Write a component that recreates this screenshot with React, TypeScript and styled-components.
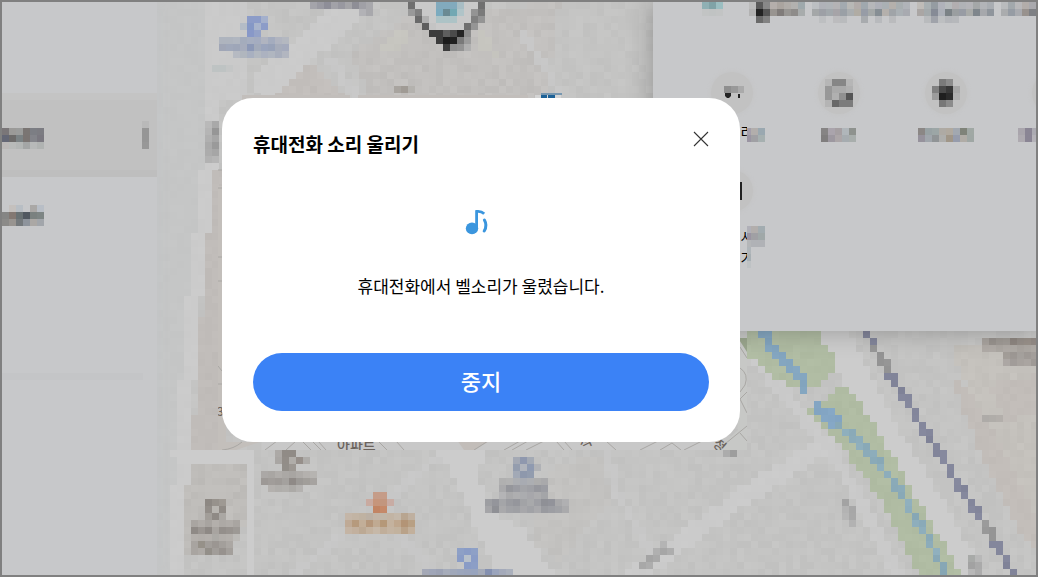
import React from "react";
import styled, { createGlobalStyle } from "styled-components";

const CELL = 7;
const COLS = 148;
const ROWS = 82;

const GlobalStyle = createGlobalStyle`
  *, *::before, *::after { box-sizing: border-box; }
  body {
    margin: 0;
    background: #c4c4c4;
    color: #000;
    font-family: "Noto Sans CJK KR", "Noto Sans", sans-serif;
  }
  button { font: inherit; color: inherit; border: 0; padding: 0; background: none; cursor: pointer; }
`;

/* ---------- map drawing ---------- */

type Point = [number, number];

const hash = (c: number, r: number) => {
  let n = (c * 374761393 + r * 668265263) | 0;
  n = Math.imul(n ^ (n >>> 13), 1274126177);
  return ((n ^ (n >>> 16)) >>> 0) / 4294967295;
};

const shift = (hex: string, d: number) =>
  "#" +
  [1, 3, 5]
    .map((i) => Math.max(0, Math.min(255, parseInt(hex.slice(i, i + 2), 16) + d)).toString(16).padStart(2, "0"))
    .join("");

const inside = (x: number, y: number, pts: Point[]) => {
  let hit = false;
  for (let i = 0, j = pts.length - 1; i < pts.length; j = i++) {
    const [xi, yi] = pts[i];
    const [xj, yj] = pts[j];
    if (yi > y !== yj > y && x < ((xj - xi) * (y - yi)) / (yj - yi) + xi) hit = !hit;
  }
  return hit;
};

const distance = (x: number, y: number, pts: Point[]) => {
  let best = Infinity;
  for (let i = 1; i < pts.length; i++) {
    const [ax, ay] = pts[i - 1];
    const [bx, by] = pts[i];
    const len = (bx - ax) ** 2 + (by - ay) ** 2;
    const t = Math.max(0, Math.min(1, ((x - ax) * (bx - ax) + (y - ay) * (by - ay)) / len));
    best = Math.min(best, Math.hypot(x - ax - t * (bx - ax), y - ay - t * (by - ay)));
  }
  return best;
};

type Shape = { color: string; area?: Point[]; line?: Point[]; width?: number; grain?: number };

const shapes: Shape[] = [
  { color: "#c5c6c6", grain: 1, area: [[0, 0], [206, 0], [206, 130], [180, 577], [0, 577]] },
  { color: "#c2bebb", grain: 3, area: [[262, 98], [310, 62], [350, 98]] },
  { color: "#c2c0be", grain: 4, area: [[370, 98], [350, 55], [400, 20], [560, 2], [545, 98]] },
  { color: "#c6c5bf", grain: 2, area: [[380, 48], [400, 30], [412, 34], [400, 48]] },
  { color: "#c6c5bf", grain: 2, area: [[475, 30], [490, 34], [498, 60], [482, 50]] },
  { color: "#c0bcb9", grain: 2, area: [[212, 170], [225, 170], [225, 450], [192, 450]] },
  { color: "#bfbdba", grain: 4, area: [[184, 458], [246, 458], [246, 520], [232, 556], [184, 556]] },
  { color: "#c4c1bc", grain: 3, area: [[950, 345], [1036, 335], [1036, 530], [1010, 500]] },
  { color: "#c2bdb9", grain: 2, area: [[952, 380], [968, 385], [1036, 515], [1036, 550], [1018, 530], [975, 440]] },
  { color: "#c2bdb9", grain: 2, area: [[990, 385], [1036, 375], [1036, 415], [1005, 420]] },
  { color: "#c3c2c0", grain: 3, area: [[550, 470], [600, 452], [612, 500], [560, 560], [530, 540]] },
  { color: "#cbcbcb", grain: 1, line: [[215, 0], [215, 110], [205, 200], [194, 300], [186, 400], [174, 580]], width: 14 },
  { color: "#cacaca", grain: 1, area: [[206, 0], [248, 0], [248, 98], [206, 98]] },
  { color: "#cbcbcb", grain: 1, line: [[345, 14], [266, 84]], width: 28 },
  { color: "#c8c8c8", grain: 1, line: [[331, 60], [356, 98]], width: 9 },
  { color: "#c8c8c8", grain: 1, line: [[520, 30], [562, 95]], width: 7 },
  { color: "#cccccc", grain: 0, line: [[176, 456], [250, 456], [250, 570]], width: 9 },
  { color: "#c8c8c8", grain: 1, line: [[290, 577], [370, 515], [440, 455]], width: 8 },
  { color: "#c7c7c7", grain: 1, line: [[375, 510], [440, 577]], width: 7 },
  { color: "#cccccc", grain: 0, area: [[436, 450], [485, 450], [478, 478], [500, 515], [525, 530], [555, 577], [500, 577], [470, 515], [455, 478]] },
  { color: "#cbcbcb", grain: 1, line: [[630, 580], [738, 500], [832, 440]], width: 18 },
  { color: "#c8c8c8", grain: 1, line: [[608, 452], [615, 490], [650, 550]], width: 8 },
  { color: "#cacaca", grain: 1, line: [[748, 350], [790, 400], [835, 455], [900, 577]], width: 12 },
  { color: "#cccccc", grain: 0, line: [[832, 331], [855, 375], [882, 430], [925, 500], [975, 585]], width: 30 },
  { color: "#b0bca3", grain: 2, area: [[740, 331], [818, 331], [838, 366], [820, 384], [788, 388], [765, 368], [740, 352]] },
  { color: "#b0bca3", grain: 2, area: [[846, 384], [870, 418], [905, 478], [965, 580], [922, 580], [884, 505], [850, 458], [806, 412]] },
  { color: "#84a6c0", grain: 2, line: [[762, 331], [776, 353], [802, 378], [804, 392]], width: 9 },
  { color: "#84a6c4", grain: 3, line: [[818, 408], [828, 416], [838, 424]], width: 12 },
  { color: "#8babb9", grain: 5, line: [[838, 424], [868, 450], [895, 483], [922, 528], [950, 580]], width: 7 },
  { color: "#83869b", grain: 4, line: [[866, 331], [880, 358], [906, 400], [960, 486], [1016, 577]], width: 7 },
  { color: "#969696", grain: 4, line: [[876, 350], [889, 372]], width: 8 },
  { color: "#979797", grain: 4, line: [[984, 522], [994, 535]], width: 8 },
];

const stamps: { x: number; y: number; rows: string[] }[] = [
  { x: 408, y: 2, rows: [
    "6f6f6f c9c9c9 c9c9c9 c9c9c9 82aabd 82aabd 82aabd a8bdc4 c9c9c9 c9c9c9 707070",
    "999999 808080 c9c9c9 c9c9c9 7cabbf 6a8a93 72a8b3 b0c4c8 c9c9c9 949494 7a7a7a",
    "- 6a6a6a b0b0b0 c9c9c9 adc3c6 adc3c6 adc3c6 c9c9c9 c9c9c9 808080 949494",
    "- - 5e5e5e c4c4c4 c9c9c9 c9c9c9 c9c9c9 c9c9c9 707070 959595 -",
    "- - - 3c3c3c 3c3c3c 5e5e5e 4b4b4b 252525 8c8c8c - -",
    "- - - - 3c3c3c 1b1b1b 202020 7a7a7a 9c9c9c - -",
    "- - - - - 3c3c3c 8e8e8e 949494 b0b0b0 - -",
  ] },
  { x: 310, y: 2, rows: [
    "a4a4aa 9a9aa2 8e8e98 a2a2a8 9898a0 a4a4a8 8e8e96 a0a0a6 a8a8ac",
    "- - - - - - - b2b2b6 a8a8ac",
  ] },
  { x: 219, y: 16, rows: [
    "- - - - 8c9cc8 8c9cc8 a4b0cc - - -",
    "- - - b4bcc6 8598c6 a8b4cc 8c9cc8 - - -",
    "- - - - 8898c8 94a2c8 - - - -",
    "aeb4be aeb4be b0b6c0 a4acbc a6aec0 a4acc0 b0b4c0 a4acbe b0b4c0 b4b8c0",
    "a0a6b6 a0a8ba 9ea6b8 a6acbc 8c98b6 a2aaba 9aa4bc 98a2b8 a6acba a4aabc",
    "- - b6bac2 b0b6be a8b0c0 b2b8c0 acb2c0 b0b6c0 a8aebc b2b6c0",
  ] },
  { x: 212, y: 65, rows: ["bec3c3 bec3c3 c4c6c6", "b8bdbd b5b5b5 b8b8b8"].slice(0, 1) },
  { x: 394, y: 86, rows: ["a8a49f a09b95 b4b2ae"] },
  { x: 205, y: 121, rows: ["b9b9b9 a9a9a9", "b5b5b5 969696", "b0b0b0 a6a6a6", "aaaaaa 9a9a9a", "acacac a6a6a6", "b2b2b2 b6b6b6"] },
  { x: 261, y: 450, rows: [
    "- - aca9a6 908b86 908b86 - - -",
    "- - a9a6a3 928d88 b0ada9 968f8a aeaca9 -",
    "- - - 928e89 9c9792 - - -",
    "aba8a6 a9a6a3 b0adaa aba8a5 a8a5a2 aeaba8 b4b1ae b6b4b1",
    "9d9996 a19d9a 9e9a97 a4a19e 8f8a87 9c9996 a19e9a a6a3a0",
    "- b4b1ae b0aeab b2b0ad acaaa7 b4b2b0 - -",
  ] },
  { x: 191, y: 499, rows: [
    "- - 8d8883 97928c 9e9993 - -",
    "- - 938e89 b8b5b0 908b86 - -",
    "- - a29e99 8f8a85 aaa7a3 - -",
    "a9a5a1 b0aca8 a8a4a0 b3afab ada9a5 b0aca8 a9a5a1",
    "8f8a86 9b9692 8e8985 a8a4a0 948f8b 98938f 9d9995",
    "b4b0ac b2aeaa b4b0ac acaaa6 b2aeaa b4b0ac -",
    "a8a4a0 969189 a29e9a 9b9692 a39f9b aba7a3 -",
    "a9a5a1 aeaaa6 938f89 a19d99 97928e a39f9b -",
  ] },
  { x: 345, y: 492, rows: [
    "- - - - c59c88 c59c88 - - - -",
    "- - - c9aaa0 c6957b c2967e c8aca4 - - -",
    "- - - - c28463 c58969 - - - -",
    "c4b6a8 c2b4a4 bfb2a2 bbb0a4 c2b4a6 c0b6a8 c2b4a4 c4b8aa b8a590 bfb0a0",
    "bfaa96 b69a7d c2ae98 b5977b c0aa92 b59878 c4b29e bfa78e b39476 b8a084",
    "c4b4a4 c2b09e bca994 c3b29f c6b8a8 c0ae9a c4b4a2 c2b29e b9a289 c2b09c",
  ] },
  { x: 422, y: 548, rows: [
    "- - - - - 8ea0c6 8a9cc6 8ea0c6 - - - - -",
    "- - - - - 8a9cc6 b8c0ca 8a9cc6 - - - - -",
    "- - - - - - 8a9cc6 8c9ec6 - - - - -",
    "a4a8b6 a0a6b8 9ca2b4 a6acba a0a8ba 9ca6bc 9aa4bc 98a4be a4aab8 8490b0 9aa4bc a4aaba aab0bc",
  ] },
  { x: 485, y: 457, rows: [
    "- - - - a4a9b4 8f98ae a4aab4 - - - - -",
    "- - - - 949dae b0b4bc 8f9ab0 b0b2b6 - - - -",
    "- - - - a2a9b6 8e98ac 929cae - - - - -",
    "- - b0b0b0 b2b2b2 acaeb2 a8abb2 acaeb2 adadad a9a9ab - - -",
    "- - a9a9ab 95969b 9b9ca2 a3a4a8 9fa0a5 96979d 9b9ca2 - - -",
    "- - b4b4b6 a9a9ab aeaeb0 abacaf a7a7ab acacae a4a5a8 - - -",
    "9d9ea2 94959b a4a5a8 9a9ba0 95969c a2a3a6 a8a9ab 9e9fa4 8f9096 92939a a8a8aa b0b0b2",
    "a5a5a8 8f9095 a9a9ab a1a2a6 9fa0a4 a7a7aa a1a2a6 a9a9ac 999a9f 9d9ea3 a1a2a6 aaaaac",
  ] },
  { x: 639, y: 541, rows: ["- - - b4b4b4 -", "- - b0b0b0 a6a6a6 adadad", "- a4a4a4 a9a9a9 - -", "a8a8a8 adadad - - -"] },
  { x: 723, y: 450, rows: ["acacac 9d9d9d"] },
  { x: 842, y: 499, rows: ["a3a3a3 -", "b3b3b3 a7a7a7", "b6b6b6 a8a8a8", "- b2b2b2"] },
  { x: 982, y: 338, rows: [
    "a8a39e 98938e 9f9a95 a19c97 8e8680 968f89 989089 928a85",
    "b0aba6 b1aca7 aca7a2 b0aba6 afaaa5 a9a49f aca7a2 afaaa5",
    "- - - a39e99 9d9894 a5a19d 9f9a96 a49f9b",
    "- - - aca7a4 a19c99 a7a29e aaa5a1 9f9a96",
  ] },
  { x: 982, y: 415, rows: ["aeaba8 b0ada9 b3afab"] },
  { x: 968, y: 555, rows: ["a8aaa8 b8b8b8", "a2a2a2 aaaaaa", "b8b8b8 acacac"] },
];

const buildMap = () => {
  const grid: string[][] = [];
  for (let r = 0; r < ROWS; r++) {
    const row: string[] = [];
    for (let c = 0; c < COLS; c++) {
      const x = 2 + c * CELL + CELL / 2;
      const y = 2 + r * CELL + CELL / 2;
      let color = "#c4c4c3";
      let grain = 3;
      for (const s of shapes) {
        const hit = s.area ? inside(x, y, s.area) : distance(x, y, s.line!) <= s.width! / 2;
        if (hit) {
          color = s.color;
          grain = s.grain ?? 2;
        }
      }
      row.push(shift(color, Math.round((hash(c, r) - 0.5) * 2 * grain)));
    }
    grid.push(row);
  }
  for (const s of stamps) {
    const c0 = Math.round((s.x - 2) / CELL);
    const r0 = Math.round((s.y - 2) / CELL);
    s.rows.forEach((line, r) =>
      line.split(" ").forEach((v, c) => {
        if (v !== "-" && grid[r0 + r] && c0 + c < COLS) grid[r0 + r][c0 + c] = "#" + v;
      }),
    );
  }
  const paths = new Map<string, string>();
  grid.forEach((row, r) => {
    let start = 0;
    for (let c = 1; c <= COLS; c++) {
      if (c === COLS || row[c] !== row[start]) {
        const w = (c - start) * CELL;
        paths.set(row[start], (paths.get(row[start]) ?? "") + `M${start * CELL} ${r * CELL}h${w}v${CELL}h-${w}z`);
        start = c;
      }
    }
  });
  return [...paths.entries()];
};

const mapPaths = buildMap();

const MapLayer = styled.svg`
  position: absolute;
  inset: 0;
  width: 100%;
  height: 100%;
`;

const CityMap = () => (
  <MapLayer viewBox="0 0 1034 573" preserveAspectRatio="xMinYMin slice" aria-hidden="true">
    <g shapeRendering="crispEdges">
      {mapPaths.map(([fill, d]) => (
        <path key={fill} fill={fill} d={d} />
      ))}
    </g>
    <clipPath id="street-detail">
      <path d="M218 130H747V450H218zM242 93H652V110H242z" />
    </clipPath>
    <g transform="translate(-2 -2)">
      <g clipPath="url(#street-detail)">
        <path fill="#c3bfbb" d="M218 186h8v256h34l-24 8h-18z" />
        <path fill="#c2bebb" d="M242 95h108v6h-108zM358 95h170v6h-170z" />
        <path fill="#c8c8c8" d="M262 440H747V450H262z" />
        <path fill="#c2bdb9" d="M457 440h34l-16 10h-11z" />
        <path fill="#c7c8c6" d="M738 330h9v120h-31l22-20z" />
        <path fill="#9aa68d" d="M738 338h9v14l-9-14z" />
        <g fill="none" stroke="#a9a7a4" strokeWidth="1">
          <path d="M218 170h4M218 188h4M218 257h4M218 281h4M218 366l4 5M218 384h4M222 450q12-1 20-8M265 450l12-9M286 450l10-9M302 441l9 9M312 441l9 9M318 441l8 9M378 441l9 9M396 441l8 9" />
          <path d="M474 450l14-9M504 450l16-9M512 450l16-9M526 450l18-9M556 441l8 9M564 441l8 9M606 441l10 9M640 450l18-9M660 450l12-7l9 7M684 450l18-9M740 347l7 11M740 368q9 6 5 17l-5 7M740 399l7-7M740 399l7 14M720 448l27-22M740 433l7 8" />
        </g>
        <path fill="#d4d4d4" d="M535 95h26v4h-26z" />
        <path fill="#7797b0" d="M541 93h21v2h-21z" />
        <path fill="#1c6196" d="M541 95h6v3h-6zM548 95h7v3h-7z" />
        <g fill="#6b635c" fontSize="14" fontWeight="500">
          <text x="337" y="450">아파트</text>
          <text x="217" y="416" fontSize="12">3</text>
          <text x="582" y="449" transform="rotate(-25 582 449)" fontSize="13">적</text>
          <text x="712" y="445" transform="rotate(40 712 445)" fontSize="13">정</text>
        </g>
      </g>
    </g>
  </MapLayer>
);

/* ---------- small tile drawings ---------- */

const Tiles = styled.svg`
  display: block;
  flex: none;
`;

const Mosaic = ({ rows, trim = 0 }: { rows: string[]; trim?: number }) => {
  const cells = rows.map((r) => r.split(" "));
  const w = Math.max(...cells.map((r) => r.length)) * CELL - trim;
  const h = rows.length * CELL;
  return (
    <Tiles width={w} height={h} viewBox={`${trim} 0 ${w} ${h}`} shapeRendering="crispEdges" aria-hidden="true">
      {cells.map((row, r) =>
        row.map((v, c) =>
          v === "-" ? null : <rect key={`${r}-${c}`} x={c * CELL} y={r * CELL} width={CELL} height={CELL} fill={"#" + v} />,
        ),
      )}
    </Tiles>
  );
};

/* ---------- page ---------- */

const Page = styled.div`
  position: relative;
  display: flex;
  justify-content: space-between;
  align-items: stretch;
  min-height: 100vh;
  border: 2px solid #808080;
  overflow: hidden;
`;

const Sidebar = styled.nav`
  position: relative;
  width: 15%;
  padding-top: 91px;
  background: #c7c8ca;
  box-shadow: 0 0 10px #c2c4c6;
`;

const DeviceRow = styled.button<{ $active?: boolean }>`
  display: flex;
  justify-content: space-between;
  align-items: flex-end;
  width: 100%;
  height: 84px;
  padding: 0 8px ${(p) => (p.$active ? 21 : 28)}px 0;
  background: ${(p) => (p.$active ? "#c1c1c1" : "transparent")};
  border-top: 7px solid ${(p) => (p.$active ? "#c4c4c4" : "transparent")};
  border-bottom: 7px solid ${(p) => (p.$active ? "#bebebe" : "transparent")};
`;

const Divider = styled.hr`
  height: 7px;
  margin: 112px 14px 0 0;
  border: 0;
  background: #c4c5c7;
`;

const DevicePanel = styled.section`
  position: relative;
  align-self: flex-start;
  width: 37%;
  height: 329px;
  background: #c7c8ca;
  box-shadow: 0 0 24px rgba(0, 0, 0, 0.25);
  overflow: hidden;
`;

const PanelHeader = styled.header`
  display: flex;
  align-items: flex-start;
  gap: 7px;
  height: 70px;
  padding-left: 49px;
`;

const Spacer = styled.span`
  width: 14px;
`;

const Actions = styled.div`
  display: grid;
  grid-template-columns: repeat(4, 107px);
  grid-auto-rows: 98px;
  padding-left: 25px;
`;

const Action = styled.button`
  display: flex;
  flex-direction: column;
  align-items: center;
  gap: 14px;
`;

const Disc = styled.span`
  display: flex;
  align-items: center;
  justify-content: center;
  width: 42px;
  height: 42px;
  border-radius: 50%;
  background: #c2c2c2;
  box-shadow: 0 0 5px #c3c3c3;
`;

const LabelLines = styled.span`
  align-self: flex-end;
  padding-right: 20px;
`;

const LabelLine = styled.span<{ $tall?: boolean; $inset?: boolean }>`
  display: flex;
  align-items: flex-start;
  justify-content: flex-end;
  height: ${(p) => (p.$tall ? 21 : 14)}px;
  padding-right: ${(p) => (p.$inset ? 14 : 0)}px;
  font-size: 14px;
  line-height: ${(p) => (p.$tall ? 21 : 7)}px;
`;

const LabelText = styled.span`
  width: 7px;
  white-space: nowrap;
  overflow-x: clip;
`;

/* ---------- dialog ---------- */

const Overlay = styled.div`
  position: absolute;
  inset: 0;
  padding: 96px 16px 16px 220px;
`;

const Dialog = styled.div`
  display: flex;
  flex-direction: column;
  width: 100%;
  max-width: 518px;
  padding: 31px;
  border-radius: 31px;
  background: #fff;
`;

const DialogHeader = styled.div`
  display: flex;
  justify-content: space-between;
  align-items: flex-start;
`;

const Title = styled.h1`
  margin: 0;
  font-size: 19px;
  font-weight: 700;
  line-height: 30px;
`;

const Close = styled.button`
  display: flex;
  width: 16px;
  height: 20px;
  align-items: center;
  justify-content: center;
`;

const Body = styled.div`
  display: flex;
  flex-direction: column;
  align-items: center;
  gap: 38px;
  padding: 50px 0 54px;
`;

const Message = styled.p`
  margin: 0;
  font-size: 17px;
  line-height: 26px;
`;

const Stop = styled.button`
  height: 58px;
  padding-bottom: 4px;
  border-radius: 29px;
  background: #3b82f6;
  color: #fff;
  font-size: 22px;
  font-weight: 500;
  line-height: 32px;
`;

export default function App() {
  return (
    <>
      <GlobalStyle />
      <Page>
        <CityMap />
        <Sidebar>
          <DeviceRow $active aria-label="device">
            <Mosaic
              rows={[
                "7a7678 9b9a98 9b9c9b 7a7573 7c7e84 7c7c82",
                "646775 6d6b6a 7b8284 7a7472 83848a 7a7880",
                "bbb8b7 b8bab9 b3b6b5 a4a6a6 b7b9b9 b0b3b2",
              ]}
            />
            <Mosaic rows={["b9b9b9", "969696", "969696", "989898"]} />
          </DeviceRow>
          <DeviceRow aria-label="device">
            <Mosaic
              rows={[
                "- c4c0bd b8bec4 - aaa8a6 b8bec6",
                "858584 837872 697173 515860 7a8180 7d8584",
                "8b8a88 989490 74797c 8e949c aba8a5 a2a6ab",
              ]}
            />
          </DeviceRow>
          <Divider />
        </Sidebar>
        <DevicePanel>
          <PanelHeader>
            <Mosaic rows={["8fb0b4 80a3a7 9bbec1", "c2c4c4 c0c3c3 c2c4c4"]} />
            <Spacer />
            <Mosaic
              rows={[
                "bbbbbb 5a5a5a 888888 b4aeab aaa49f b0aca8 b2b1af 9fa9ac",
                "b2b2b2 232323 545454 989490 807c7a 989693 8e8c8a a8acac",
                "- 6a6a6a 828282",
              ]}
            />
            <Mosaic
              rows={[
                "bcbfc2 b0b2b8 b0b4b8 b4b3b5 a3aab0 b8b8b6 b2acaa a0a8ae b6b7ba aeb0b8 aab0b4 b4b0ac a8aeb0 b0b3b8",
                "a4a7a8 9da0a6 a2a8ac a6a4a8 9aa0a6 aaaeb0 b0aca4 979ca6 a4a8a8 868e94 b4b0ac a0a4a8 aab0b4 a8aab0",
                "- bdbfc1 - bcbcbe b9bbbd - - a8abae - b8babd - babbbd",
              ]}
            />
            <Mosaic
              rows={[
                "bfbcb8 a9b0b2 959ca2 b0b2ba b6babc b2aeb0 b0b2b6 b4b4b8 a4a7a8 b2b4b8 a9adb2",
                "aaa6a4 a4aaac 868b96 acb0b8 7b8286 9a9ea0 989ca4 a9aba9 7f868c a6a8ac 8f959c",
                "- b9bbbd a0a3aa bdbfc1 b4b6ba b6b8bb",
              ]}
            />
            <Mosaic rows={["b9bbbd a2a8ac b8b8ba b2adaa a9a9ad", "aaacae 969ca4 a9abb0 98928e 7e8084"]} />
          </PanelHeader>
          <Actions>
            <Action>
              <Disc>
                <svg width="24" height="14" aria-hidden="true">
                  <path fill="#8f8f8f" d="M4 0h7v7H4z" />
                  <path fill="#999" d="M11 0h7v7h-7z" />
                  <path fill="#aaa" d="M18 0h6v7h-6z" />
                  <path fill="#222" d="M5 7h6v3l-2 2H7l-2-2zM18 8h2v4h-2z" />
                </svg>
              </Disc>
              <LabelLines>
                <LabelLine>
                  <LabelText>리</LabelText>
                  <Mosaic trim={3} rows={["a39eab b2aeac 9aa8b0", "9a94a2 a0a0a4 a6b0b0"]} />
                </LabelLine>
              </LabelLines>
            </Action>
            <Action aria-label="action">
              <Disc>
                <Mosaic
                  rows={[
                    "b6b6b6 868686 868686 b6b6b6",
                    "989898 aaaaaa aaaaaa b0b0b0",
                    "989898 b0b0b0 909090 555555",
                    "b4b4b4 686868 7c7c7c 7c7c7c",
                  ]}
                />
              </Disc>
              <Mosaic rows={["868484 aaa4ac a59fa2 b0b6ba 8e928e", "807e7e 9d98a0 aca6a8 a6acb0 a8aeac"]} />
            </Action>
            <Action aria-label="action">
              <Disc>
                <Mosaic
                  rows={[
                    "- 7a7a7a 8c8c8c -",
                    "808080 4a4a4a 383838 a8a8a8",
                    "9c9c9c 1f1f1f 2b2b2b b0b0b0",
                    "- 787878 8c8c8c -",
                  ]}
                />
              </Disc>
              <Mosaic
                rows={[
                  "8b8785 98a2a4 9ca6a6 aeaaa4 b0a99f a2a8b0 7f8379 a0a8a4",
                  "96929c a0a6ac 909496 aeaeac a09688 969cac b0aca6 9fa7a4",
                ]}
              />
            </Action>
            <Action aria-label="action">
              <Disc />
              <Mosaic
                rows={[
                  "a9a5ac 8a8594 acabb2 a09da4 a9a5ac 8a8594 acabb2 a09da4 a9a5ac 8a8594",
                  "aeaab0 8a8594 b4b2b8 a09da4 a9a5ac 8a8594 acabb2 a09da4 a9a5ac 8a8594",
                ]}
              />
            </Action>
            <Action>
              <Disc>
                <svg width="20" height="18" aria-hidden="true">
                  <path fill="none" stroke="#222" strokeWidth="2" d="M1 0h18v18H1z" />
                </svg>
              </Disc>
              <LabelLines>
                <LabelLine $tall>
                  <LabelText>시</LabelText>
                  <Mosaic trim={3} rows={["b0b0b8 b2aeac a2acb0", "9a94a2 a0a0a4 a0a8a8", "b4b6b8 b0b2b6 b0b2b6"]} />
                </LabelLine>
                <LabelLine $tall $inset>
                  <LabelText>기</LabelText>
                  <Mosaic trim={3} rows={["b0b6ba", "a8b0b4", "bec2c4"]} />
                </LabelLine>
              </LabelLines>
            </Action>
          </Actions>
        </DevicePanel>
        <Overlay>
          <Dialog role="dialog" aria-labelledby="dialog-title">
            <DialogHeader>
              <Title id="dialog-title">휴대전화 소리 울리기</Title>
              <Close aria-label="닫기">
                <svg width="16" height="16" viewBox="0 0 16 16" aria-hidden="true">
                  <path d="M1 1l14 14M15 1L1 15" stroke="#333" strokeWidth="1.1" />
                </svg>
              </Close>
            </DialogHeader>
            <Body>
              <svg width="32" height="26" viewBox="0 0 32 26" aria-hidden="true">
                <ellipse cx="7" cy="19.4" rx="6.2" ry="5.8" fill="#3b96de" />
                <path d="M11.6 19.5V2.4C14.4 2 17.2 2.8 19.2 4.8" fill="none" stroke="#3b96de" strokeWidth="2.8" />
                <path d="M19.4 11C21.4 14.4 21.4 18.4 19.2 22" fill="none" stroke="#3b96de" strokeWidth="3" strokeLinecap="round" />
              </svg>
              <Message>휴대전화에서 벨소리가 울렸습니다.</Message>
            </Body>
            <Stop>중지</Stop>
          </Dialog>
        </Overlay>
      </Page>
    </>
  );
}
